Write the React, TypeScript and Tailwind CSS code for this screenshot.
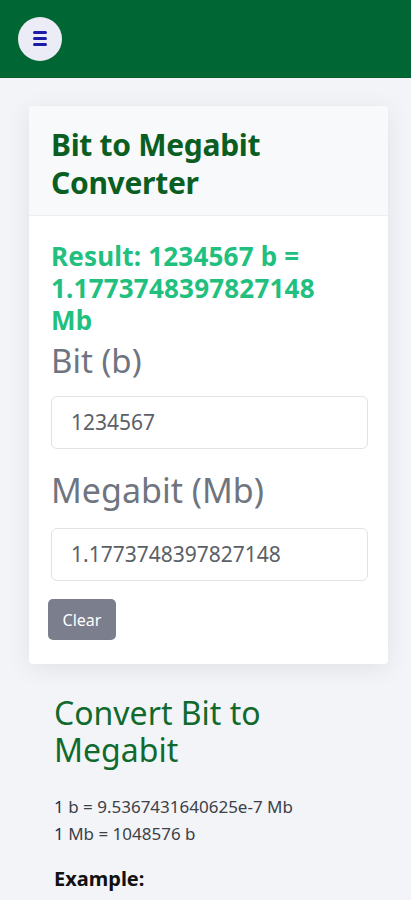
import React from "react";

export default function App() {
  return (
    <div className="min-h-[900px] bg-[#f3f4f7]" style={{ fontFamily: '"Noto Sans", "Open Sans", sans-serif' }}>
      <header className="h-[78px] bg-[#006633] border-b border-[#0a5a2a] flex items-center pl-[18px]">
        <button className="w-[44px] h-[44px] rounded-full bg-[#ececf6] flex flex-col items-center justify-center gap-[3px]">
          <span className="block w-[14px] h-[3px] rounded-full bg-[#1b1ba8]" />
          <span className="block w-[14px] h-[3px] rounded-full bg-[#1b1ba8]" />
          <span className="block w-[14px] h-[3px] rounded-full bg-[#1b1ba8]" />
        </button>
      </header>
      <main className="pt-[28px] px-[29px]">
        <div className="w-[359px] bg-white rounded-[4px] shadow-[0_4px_24px_rgba(0,0,0,0.08)] overflow-hidden">
          <div className="bg-[#f8f9fb] border-b border-[#eceef1] px-[22px] pt-[20px] pb-[13px]">
            <h1 className="text-[30px] leading-[38px] font-bold text-[#0a5e22] tracking-[-0.3px]">Bit to Megabit Converter</h1>
          </div>
          <div className="px-[22px] pt-[24px] pb-[24px]">
            <p className="w-[300px] text-[26px] leading-[32px] font-bold text-[#22c07e] tracking-[0.2px]">Result: 1234567 b = 1.1773748397827148 Mb</p>
            <label className="block text-[33px] leading-[40px] text-[#6f7580] mt-[5px]">Bit (b)</label>
            <div className="mt-[15px] h-[53px] w-[317px] border border-[#dfe2e6] rounded-[6px] flex items-center px-[19px] text-[21px] text-[#5c6066]">1234567</div>
            <label className="block text-[34px] leading-[40px] text-[#6f7580] mt-[21px]">Megabit (Mb)</label>
            <div className="mt-[18px] h-[53px] w-[317px] border border-[#dfe2e6] rounded-[6px] flex items-center px-[19px] text-[21px] text-[#5c6066]">1.1773748397827148</div>
            <button className="mt-[18px] ml-[-3px] w-[68px] h-[41px] rounded-[5px] bg-[#7b7e8c] text-white text-[16px] flex items-center justify-center">Clear</button>
          </div>
        </div>
        <section className="px-[25px] pt-[30px]">
          <h2 className="text-[32px] leading-[37px] text-[#10692d]">Convert Bit to Megabit</h2>
          <div className="mt-[25px] text-[17px] leading-[27px] text-[#3d4148]">
            <p><span className="text-[#15305c]">1</span> b = 9.5367431640625e-7 Mb</p>
            <p><span className="text-[#15305c]">1</span> Mb = 1048576 b</p>
          </div>
          <p className="mt-[19px] text-[20px] leading-[26px] font-bold text-[#111]">Example:</p>
        </section>
      </main>
    </div>
  );
}
